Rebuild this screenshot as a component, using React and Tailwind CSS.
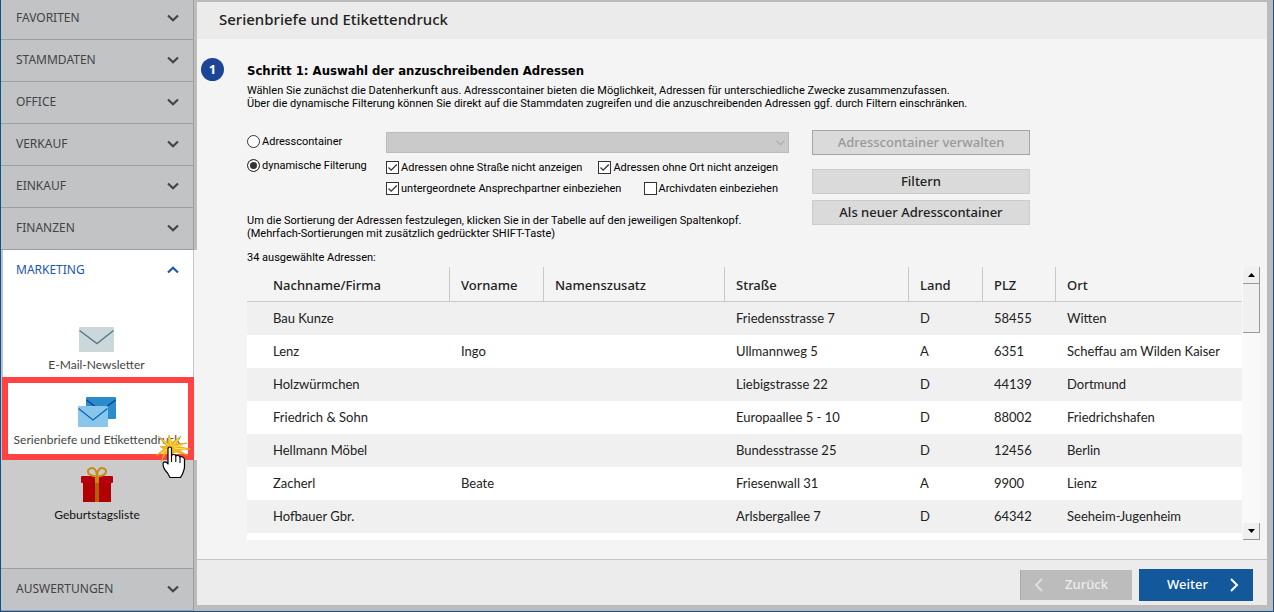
import React, { useState } from 'react';

const topItems = ['FAVORITEN', 'STAMMDATEN', 'OFFICE', 'VERKAUF', 'EINKAUF', 'FINANZEN'];

const columns = [
  { key: 'name', label: 'Nachname/Firma', width: 'w-[203px]' },
  { key: 'vorname', label: 'Vorname', width: 'w-[94px]' },
  { key: 'zusatz', label: 'Namenszusatz', width: 'w-[181px]' },
  { key: 'strasse', label: 'Straße', width: 'w-[184px]' },
  { key: 'land', label: 'Land', width: 'w-[74px]' },
  { key: 'plz', label: 'PLZ', width: 'w-[73px]' },
  { key: 'ort', label: 'Ort', width: '' },
];

const addresses = [
  { name: 'Bau Kunze', vorname: '', strasse: 'Friedensstrasse 7', land: 'D', plz: '58455', ort: 'Witten' },
  { name: 'Lenz', vorname: 'Ingo', strasse: 'Ullmannweg 5', land: 'A', plz: '6351', ort: 'Scheffau am Wilden Kaiser' },
  { name: 'Holzwürmchen', vorname: '', strasse: 'Liebigstrasse 22', land: 'D', plz: '44139', ort: 'Dortmund' },
  { name: 'Friedrich & Sohn', vorname: '', strasse: 'Europaallee 5 - 10', land: 'D', plz: '88002', ort: 'Friedrichshafen' },
  { name: 'Hellmann Möbel', vorname: '', strasse: 'Bundesstrasse 25', land: 'D', plz: '12456', ort: 'Berlin' },
  { name: 'Zacherl', vorname: 'Beate', strasse: 'Friesenwall 31', land: 'A', plz: '9900', ort: 'Lienz' },
  { name: 'Hofbauer Gbr.', vorname: '', strasse: 'Arlsbergallee 7', land: 'D', plz: '64342', ort: 'Seeheim-Jugenheim' },
];

const Chevron = ({ up }) => (
  <svg width="12" height="8" viewBox="0 0 12 8" fill="none" stroke="currentColor" strokeWidth="2.2">
    <path d={up ? 'M1 6.5 L6 1.8 L11 6.5' : 'M1 1.5 L6 6.2 L11 1.5'} />
  </svg>
);

const NavItem = ({ label, first }) => (
  <button
    type="button"
    className={`flex w-full items-center justify-between border-r border-b border-[#9c9e9f] bg-[#c1c3c4] pl-[15px] pr-[14px] text-[#444]
      ${first ? 'h-10 pb-1' : 'h-[42px] pb-[2px]'}`}
  >
    {label}
    <Chevron />
  </button>
);

const MailIcon = () => (
  <svg width="35" height="25" viewBox="0 0 35 25" fill="none">
    <rect width="35" height="25" rx="1" fill="#cbd7d8" />
    <path d="M0.500 3.500 L18 16.5 L34.500 3.500" stroke="#57798a" strokeWidth="1.4" />
  </svg>
);

const LettersIcon = () => (
  <svg width="38" height="30" viewBox="0 0 38 30" fill="none">
    <rect x="8" width="30" height="22" rx="1" fill="#2b8ccc" />
    <path d="M8.500 3 L23 14 L37.500 3" stroke="#0d3f8f" strokeWidth="1.3" />
    <rect y="9" width="30" height="21" rx="1" fill="#88c6ec" />
    <path d="M0.500 11.5 L15 23 L29.5 11.5" stroke="#0f63b0" strokeWidth="1.3" />
  </svg>
);

const GiftIcon = () => (
  <svg width="32" height="35" viewBox="0 0 32 35" fill="none">
    <rect x="2" y="15" width="28" height="20" fill="#b00003" />
    <rect y="9" width="32" height="7" rx="1" fill="#b5000f" />
    <rect x="14" y="9" width="4" height="7" fill="#c98a10" />
    <rect x="14" y="16" width="4" height="19" fill="#b45f06" />
    <path
      d="M15.500 9.500 C11 9 7 7.500 7 4.500 C7 1.500 11 0 13.500 2 C15.500 3.500 15.800 7 16 9.500 C16.200 7 16.500 3.500 18.500 2 C21 0 25 1.500 25 4.500 C25 7.500 21 9 16.500 9.500"
      stroke="#c98a10"
      strokeWidth="2"
    />
  </svg>
);

const ClickHand = () => (
  <svg width="36" height="44" viewBox="0 0 36 44" className="pointer-events-none absolute left-[155px] top-[58px] z-10">
    <path
      d="M2 1 L11.500 8 L13 0 L16 7.500 L25 1 L20 9 L31 8 L22 11.500 L35 14 L23 15.200 L32 20.500 L20 17 L16 19 L10 18 L5 27 L8 17.500 L0 20.500 L8 14 L4 11.500 L11 11.500 Z"
      fill="#f5b914"
      stroke="#d39a0c"
      strokeWidth="0.6"
    />
    <path d="M7 5 L13 11 M13.500 3 L15 11 M22 4 L17 11 M28 9.500 L18 12 M30 14 L19 13.500 M5 18.500 L12 14" stroke="#ffe27a" strokeWidth="1" />
    <path
      d="M12 28 L12 13.500 C12 11.500 15.500 11.500 15.500 13.500 L15.500 21 C16 19 19.500 19 19.800 21 C21 19.800 23.500 20 24 22 C26 21 28 22 28.500 24.500 L28.500 32 C28.500 35 27 37 26.500 39 L24.500 42.500 L14 42.500 L11.500 38 C8.500 35 7 32 7 29 C7 26.500 10 26 12 29 Z"
      fill="#fff"
      stroke="#000"
      strokeWidth="1.2"
      strokeLinejoin="round"
    />
    <path d="M15.500 20 L15.500 27 M19.800 21 L19.800 27 M24 22 L24 28" stroke="#000" strokeWidth="1.1" />
  </svg>
);

const CheckBox = ({ label, checked }) => {
  const [value, setValue] = useState(checked);

  return (
    <label className="flex items-center gap-[2px]">
      <span className="relative flex">
        <input
          type="checkbox"
          checked={value}
          onChange={(e) => setValue(e.target.checked)}
          className="size-[13px] appearance-none border border-[#333] bg-white"
        />
        {value && (
          <svg width="13" height="13" viewBox="0 0 13 13" fill="none" className="pointer-events-none absolute inset-0">
            <path d="M2.500 6.500 L5.200 9.200 L10.800 3.500" stroke="#333" strokeWidth="1.3" />
          </svg>
        )}
      </span>
      {label}
    </label>
  );
};

const Radio = ({ label, value, selected, onSelect }) => (
  <label className="flex items-center gap-[2px]">
    <input
      type="radio"
      name="source"
      value={value}
      checked={selected === value}
      onChange={() => onSelect(value)}
      className="size-[13px] appearance-none rounded-full border border-[#333] bg-white checked:bg-[#333] checked:shadow-[inset_0_0_0_2px_white]"
    />
    {label}
  </label>
);

const Sidebar = () => (
  <nav className="flex w-[196px] shrink-0 flex-col font-['Noto_Sans',sans-serif] text-xs">
    <div className="bg-[#bfbdbb] pr-[3px]">
      {topItems.map((item, i) => (
        <NavItem key={item} label={item} first={i === 0} />
      ))}
    </div>

    {/* Open section */}
    <div className="bg-[#f4f4f4] pr-[3px]">
      <div className="border-r border-l-2 border-r-[#c8c8c8] border-l-[#c1c3c4] bg-white">
        <button type="button" className="flex h-[42px] w-full items-center justify-between pb-[2px] pl-[13px] pr-[14px] text-[#1a56b4]">
          MARKETING
          <Chevron up />
        </button>
        <button
          type="button"
          className="flex w-full flex-col items-center gap-[5px] pb-1 pr-[3px] pt-[35px] font-['Lato',sans-serif] leading-4 text-[#444]"
        >
          <MailIcon />
          E-Mail-Newsletter
        </button>
      </div>
      <div className="relative bg-[#c1c3c4] pl-px">
        <button
          type="button"
          className="flex w-full flex-col items-center gap-[5px] whitespace-nowrap border-6 border-[#ff4343] bg-white pb-[6px] pr-[2px] pt-[14px] font-['Lato',sans-serif] leading-4 text-[#444]"
        >
          <LettersIcon />
          Serienbriefe und Etikettendruck
        </button>
        <ClickHand />
      </div>
    </div>

    <div className="flex flex-1 flex-col bg-[#bbb] pr-[3px]">
      <div className="flex-1 border-r border-b border-[#9c9e9f] bg-[#cbcbcb]">
        <button
          type="button"
          className="flex w-full flex-col items-center gap-[5px] pt-[7px] font-['Lato',sans-serif] leading-4 text-[#111]"
        >
          <GiftIcon />
          Geburtstagsliste
        </button>
      </div>
      <NavItem label="AUSWERTUNGEN" />
    </div>
  </nav>
);

const AddressTable = () => (
  <div className="flex flex-1">
    <div className="flex-1 bg-white">
      <table className="w-full table-fixed border-separate border-spacing-0 text-left text-[13px] text-[#222]">
        <thead className="font-['Noto_Sans',sans-serif]">
          <tr className="h-[35px] bg-[#f4f4f4]">
            {columns.map((col) => (
              <th
                key={col.key}
                className={`border-r border-b border-[#c8c8c8] p-0 pl-[11px] pt-[2px] font-medium first:pl-[26px] last:border-r-0 ${col.width}`}
              >
                {col.label}
              </th>
            ))}
          </tr>
        </thead>
        <tbody className="font-['Lato',sans-serif]">
          {addresses.map((row) => (
            <tr key={row.name} className="h-[33px] odd:bg-[#f0f0f0]">
              {columns.map((col) => (
                <td key={col.key} className="whitespace-nowrap p-0 pl-[11px] first:pl-[26px]">
                  {row[col.key]}
                </td>
              ))}
            </tr>
          ))}
        </tbody>
      </table>
    </div>

    {/* Scrollbar */}
    <div className="flex w-[18px] flex-col bg-[#f9f9f9] pl-px">
      <button
        type="button"
        aria-label="Nach oben"
        className="flex h-[17px] items-center justify-center border-r border-b border-[#999] bg-[#f0f0f0]"
      >
        <svg width="7" height="4" viewBox="0 0 7 4"><path d="M0 4 L3.500 0 L7 4 Z" fill="#000" /></svg>
      </button>
      <div className="h-[49px] border-r border-b border-[#999] bg-[#f0f0f0]" />
      <div className="flex-1" />
      <button
        type="button"
        aria-label="Nach unten"
        className="flex h-[17px] items-center justify-center border-r border-b border-[#999] bg-[#f0f0f0]"
      >
        <svg width="7" height="4" viewBox="0 0 7 4"><path d="M0 0 L3.500 4 L7 0 Z" fill="#000" /></svg>
      </button>
    </div>
  </div>
);

const App = () => {
  const [source, setSource] = useState('filter');

  return (
    <div className="flex min-h-screen border-x border-b border-[#0f4f94] bg-[#bbb]">
      <Sidebar />

      <main className="flex flex-1 flex-col border-t-2 border-r-6 border-b-6 border-[#bbb] bg-[#f4f4f4]">
        <header className="flex h-[37px] items-center bg-[#ebebeb] pb-[2px] pl-[22px]">
          <h1 className="font-['Noto_Sans',sans-serif] text-[15px] font-medium text-[#222]">Serienbriefe und Etikettendruck</h1>
        </header>

        <section className="flex flex-1 gap-[23px] pb-[19px] pl-1 pr-[7px] pt-[19px]">
          <div className="flex size-[23px] shrink-0 items-center justify-center rounded-full bg-[#1c4595] font-['Noto_Sans',sans-serif] text-[13px] font-bold text-white">
            1
          </div>

          <div className="flex flex-1 flex-col font-['Roboto',sans-serif] text-[11px] leading-[13px] text-black">
            <h2 className="mt-[5px] font-['DejaVu_Sans_Condensed','DejaVu_Sans',sans-serif] text-[13px] font-bold leading-4">
              Schritt 1: Auswahl der anzuschreibenden Adressen
            </h2>
            <p className="mt-[5px]">
              Wählen Sie zunächst die Datenherkunft aus. Adresscontainer bieten die Möglichkeit, Adressen für unterschiedliche Zwecke zusammenzufassen.
              <br />
              Über die dynamische Filterung können Sie direkt auf die Stammdaten zugreifen und die anzuschreibenden Adressen ggf. durch Filtern einschränken.
            </p>

            <div className="mt-[20px] flex gap-[23px]">
              <div className="w-[542px]">
                <div className="flex">
                  <div className="flex w-[139px] flex-col gap-[11px] pt-[5px]">
                    <Radio label="Adresscontainer" value="container" selected={source} onSelect={setSource} />
                    <Radio label="dynamische Filterung" value="filter" selected={source} onSelect={setSource} />
                  </div>
                  <div className="flex flex-1 flex-col gap-2 pt-[2px]">
                    <div className="relative flex">
                      <select
                        disabled
                        aria-label="Adresscontainer"
                        className="h-[21px] w-full appearance-none border border-[#bbb] bg-[#cacaca]"
                      >
                        <option></option>
                      </select>
                      <svg width="9" height="6" viewBox="0 0 9 6" fill="none" className="pointer-events-none absolute right-1 top-2">
                        <path d="M0.500 0.800 L4.500 4.800 L8.500 0.800" stroke="#999" />
                      </svg>
                    </div>
                    <div className="flex justify-between pr-[11px]">
                      <CheckBox label="Adressen ohne Straße nicht anzeigen" checked />
                      <CheckBox label="Adressen ohne Ort nicht anzeigen" checked />
                    </div>
                    <div className="flex justify-between pr-[11px]">
                      <CheckBox label="untergeordnete Ansprechpartner einbeziehen" checked />
                      <CheckBox label="Archivdaten einbeziehen" checked={false} />
                    </div>
                  </div>
                </div>
                <p className="mt-[19px]">
                  Um die Sortierung der Adressen festzulegen, klicken Sie in der Tabelle auf den jeweiligen Spaltenkopf.
                  <br />
                  (Mehrfach-Sortierungen mit zusätzlich gedrückter SHIFT-Taste)
                </p>
              </div>

              <div className="flex w-[218px] flex-col font-['Noto_Sans',sans-serif] text-[13px] font-medium text-[#222]">
                <button type="button" disabled className="mb-[14px] h-[25px] border border-[#a5a5a5] bg-[#dadada] text-[#999]">
                  Adresscontainer verwalten
                </button>
                <button type="button" className="mb-[6px] h-[25px] border border-[#ccc] bg-[#dadada]">
                  Filtern
                </button>
                <button type="button" className="h-[25px] border border-[#ccc] bg-[#dadada]">
                  Als neuer Adresscontainer
                </button>
              </div>
            </div>

            <p className="mb-[3px] mt-[11px]">34 ausgewählte Adressen:</p>
            <AddressTable />
          </div>
        </section>

        <footer className="flex h-[46px] items-center justify-end gap-[7px] border-t border-[#c4c4c4] bg-[#ececec] pr-[14px] pt-1 font-['Noto_Sans',sans-serif] text-[13px] font-medium">
          <button
            type="button"
            disabled
            className="flex h-[30px] w-[112px] items-center justify-between border-l border-[#aaa] bg-[#bcbcbc] pl-[13px] pr-6 text-[#ececec]"
          >
            <svg width="9" height="14" viewBox="0 0 9 14" fill="none" stroke="#dedede" strokeWidth="2">
              <path d="M8 1 L2 7 L8 13" />
            </svg>
            Zurück
          </button>
          <button type="button" className="flex h-8 w-[114px] items-center justify-between bg-[#12589b] pl-7 pr-[14px] text-white">
            Weiter
            <svg width="9" height="14" viewBox="0 0 9 14" fill="none" stroke="currentColor" strokeWidth="2">
              <path d="M1 1 L7 7 L1 13" />
            </svg>
          </button>
        </footer>
      </main>
    </div>
  );
};

export default App;
